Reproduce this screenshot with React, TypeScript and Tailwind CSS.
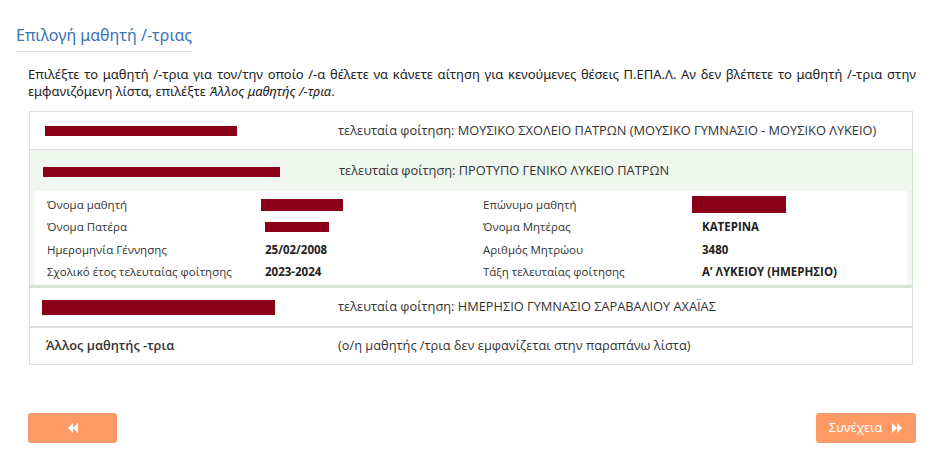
const Redact = ({ className }: { className: string }) => (
  <div className={`bg-[#8a0019] ${className}`} />
);

const BackIcon = () => (
  <svg width="12" height="10" viewBox="0 0 12 10" fill="white">
    <polygon points="6,0 6,10 1,5" />
    <polygon points="11,0 11,10 6,5" />
  </svg>
);

const ForwardIcon = () => (
  <svg width="12" height="10" viewBox="0 0 12 10" fill="white">
    <polygon points="1,0 1,10 6,5" />
    <polygon points="6,0 6,10 11,5" />
  </svg>
);

const details: [string, React.ReactNode, string, React.ReactNode][] = [
  [
    "Όνομα μαθητή",
    <Redact className="w-[82px] h-[12px] mt-[1px] ml-[-4px]" />,
    "Επώνυμο μαθητή",
    <Redact className="w-[94px] h-[17px] ml-[-10px]" />,
  ],
  ["Όνομα Πατέρα", <Redact className="w-[64px] h-[10px]" />, "Όνομα Μητέρας", "ΚΑΤΕΡΙΝΑ"],
  ["Ημερομηνία Γέννησης", "25/02/2008", "Αριθμός Μητρώου", "3480"],
  ["Σχολικό έτος τελευταίας φοίτησης", "2023-2024", "Τάξη τελευταίας φοίτησης", "Α’ ΛΥΚΕΙΟΥ (ΗΜΕΡΗΣΙΟ)"],
];

const App = () => {
  return (
    <div
      className="bg-white min-h-[456px] pl-4 pr-[15px] pb-4 text-[#333]"
      style={{ fontFamily: '"Open Sans", "Noto Sans", sans-serif' }}
    >
      <h2
        className="inline-block mt-[23px] pb-[4px] border-b border-[#ddd] text-[16px] leading-[24px] text-[#3b73b9]"
        style={{ fontFamily: '"Noto Sans", sans-serif' }}
      >
        Επιλογή μαθητή /-τριας
      </h2>

      <div className="pl-3">
        <p
          className="mt-[14px] text-[13px] leading-[17px] text-justify text-[#222]"
          style={{ fontFamily: '"Noto Sans", sans-serif' }}
        >
          Επιλέξτε το μαθητή /-τρια για τον/την οποίο /-α θέλετε να κάνετε αίτηση για κενούμενες θέσεις Π.ΕΠΑ.Λ. Αν δεν
          βλέπετε το μαθητή /-τρια στην εμφανιζόμενη λίστα, επιλέξτε <i>Άλλος μαθητής /-τρια</i>.
        </p>

        <div className="mt-[11px] mr-[3px] ml-[1px] border border-[#ddd] text-[12.8px]">
          <div className="flex items-center h-[37px]">
            <div className="w-[308px] pl-[15px]">
              <Redact className="w-[192px] h-[10px]" />
            </div>
            <div>τελευταία φοίτηση: ΜΟΥΣΙΚΟ ΣΧΟΛΕΙΟ ΠΑΤΡΩΝ (ΜΟΥΣΙΚΟ ΓΥΜΝΑΣΙΟ - ΜΟΥΣΙΚΟ ΛΥΚΕΙΟ)</div>
          </div>

          <div className="border-t border-[#ddd] -mx-px">
            <div className="bg-[#eff7ee] border-x border-b-2 border-[#cfe7cb]">
              <div className="flex items-center h-[41px]">
                <div className="w-[309px] pl-[13px]">
                  <Redact className="w-[237px] h-[10px] mt-[2px]" />
                </div>
                <div>τελευταία φοίτηση: ΠΡΟΤΥΠΟ ΓΕΝΙΚΟ ΛΥΚΕΙΟ ΠΑΤΡΩΝ</div>
              </div>
              <div className="mx-[5px] bg-white py-[2px] pl-[12px] text-[11.5px]">
                {details.map(([l1, v1, l2, v2]) => (
                  <div key={l1} className="grid grid-cols-[218px_218px_219px_1fr] items-center h-[22.5px]">
                    <div>{l1}</div>
                    <div className="font-bold text-[#222]">{v1}</div>
                    <div>{l2}</div>
                    <div className="font-bold text-[#222]">{v2}</div>
                  </div>
                ))}
              </div>
            </div>
          </div>

          <div className="flex items-center h-[39px] border-t border-[#ddd]">
            <div className="w-[308px] pl-[12px]">
              <Redact className="w-[233px] h-[15px]" />
            </div>
            <div>τελευταία φοίτηση: ΗΜΕΡΗΣΙΟ ΓΥΜΝΑΣΙΟ ΣΑΡΑΒΑΛΙΟΥ ΑΧΑΪΑΣ</div>
          </div>

          <div className="flex items-center h-[38px] border-t-2 border-[#ddd]">
            <div className="w-[308px] pl-[16px] font-semibold">Άλλος μαθητής -τρια</div>
            <div>(ο/η μαθητής /τρια δεν εμφανίζεται στην παραπάνω λίστα)</div>
          </div>
        </div>

        <div className="mt-[48px] flex justify-between">
          <button className="w-[89px] h-[30px] rounded-[3px] bg-[#fe9a66] flex items-center justify-center">
            <BackIcon />
          </button>
          <button
            className="w-[100px] h-[30px] rounded-[3px] bg-[#fe9a66] flex items-center justify-center gap-[9px] text-white text-[13px]"
            style={{ fontFamily: '"Noto Sans", sans-serif' }}
          >
            <span>Συνέχεια</span>
            <ForwardIcon />
          </button>
        </div>
      </div>
    </div>
  );
};

export default App;
